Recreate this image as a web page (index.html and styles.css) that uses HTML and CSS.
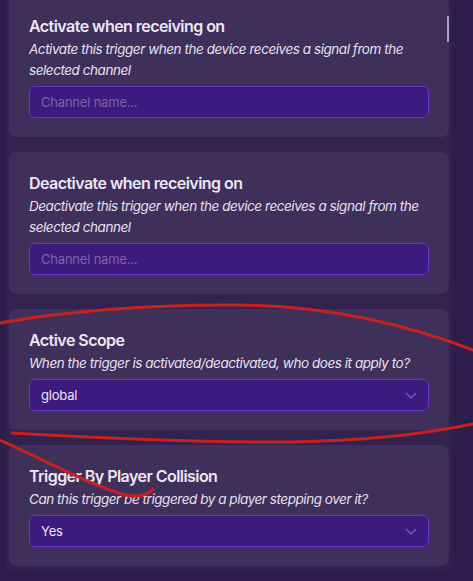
FILE: index.html
```html
<!DOCTYPE html>
<html lang="en">
<head>
<meta charset="utf-8">
<title>Trigger settings</title>
<link rel="stylesheet" href="styles.css">
</head>
<body>
<div class="panel">
  <section class="card">
    <h3 class="title">Activate when receiving on</h3>
    <p class="desc">Activate this trigger when the device receives a signal from the selected channel</p>
    <div class="field"><span class="placeholder">Channel name...</span></div>
  </section>
  <section class="card">
    <h3 class="title">Deactivate when receiving on</h3>
    <p class="desc">Deactivate this trigger when the device receives a signal from the selected channel</p>
    <div class="field"><span class="placeholder">Channel name...</span></div>
  </section>
  <section class="card">
    <h3 class="title">Active Scope</h3>
    <p class="desc">When the trigger is activated/deactivated, who does it apply to?</p>
    <div class="field select"><span class="value">global</span>
      <svg class="chev" width="12" height="7" viewBox="0 0 12 7"><path d="M1 1 L6 6 L11 1" fill="none" stroke="#7f62b8" stroke-width="1.1"/></svg>
    </div>
  </section>
  <section class="card">
    <h3 class="title">Trigger By Player Collision</h3>
    <p class="desc">Can this trigger be triggered by a player stepping over it?</p>
    <div class="field select"><span class="value">Yes</span>
      <svg class="chev" width="12" height="7" viewBox="0 0 12 7"><path d="M1 1 L6 6 L11 1" fill="none" stroke="#7f62b8" stroke-width="1.1"/></svg>
    </div>
  </section>
</div>
<div class="scrollthumb"></div>
<svg class="marks" width="473" height="581" viewBox="0 0 473 581">
  <path d="M0 323 C 60 312, 150 304, 240 305 C 320 306, 400 322, 473 350" fill="none" stroke="#c62020" stroke-width="3" stroke-linecap="round"/>
  <path d="M12 433 C 100 438, 200 443, 290 442 C 360 441, 420 435, 473 424" fill="none" stroke="#c62020" stroke-width="3" stroke-linecap="round"/>
  <path d="M0 440 C 40 458, 90 485, 125 495 C 140 498, 150 494, 153 489" fill="none" stroke="#c62020" stroke-width="3" stroke-linecap="round"/>
</svg>
</body>
</html>
```
FILE: styles.css
```css
html, body {
  margin: 0;
  padding: 0;
}
body {
  width: 473px;
  height: 581px;
  overflow: hidden;
  background: #2e1e4d;
  font-family: Inter, "Noto Sans", sans-serif;
  position: relative;
}
.panel {
  margin: -5px 0 0 6px;
  width: 440px;
  padding: 0 3px 4px 3px;
  background: #32224f;
  display: flex;
  flex-direction: column;
  gap: 15px;
}
.card {
  background: #3f2f5b;
  border-radius: 7px;
  padding: 20px 20px 19px 20px;
}
.title {
  margin: 0;
  font-size: 16px;
  line-height: 22px;
  font-weight: 600;
  letter-spacing: -0.55px;
  color: #ebe7f1;
}
.desc {
  margin: 2px 0 5px 0;
  font-size: 13.5px;
  line-height: 21px;
  font-style: italic;
  letter-spacing: -0.45px;
  color: #e6e1ee;
}
.field {
  height: 30px;
  border: 1px solid #6634cc;
  border-radius: 6px;
  background: #3d1a7e;
  display: flex;
  align-items: center;
  padding: 0 11px;
  font-size: 13px;
  letter-spacing: -0.2px;
}
.placeholder {
  color: #7a63a6;
}
.value {
  color: #ebe6f4;
}
.select {
  justify-content: space-between;
}
.chev {
  margin-right: 0;
}
.scrollthumb {
  position: absolute;
  left: 447px;
  top: 16px;
  width: 2px;
  height: 26px;
  background: #aea3c6;
  border-radius: 1px;
}
.marks {
  position: absolute;
  left: 0;
  top: 0;
  pointer-events: none;
}
```
